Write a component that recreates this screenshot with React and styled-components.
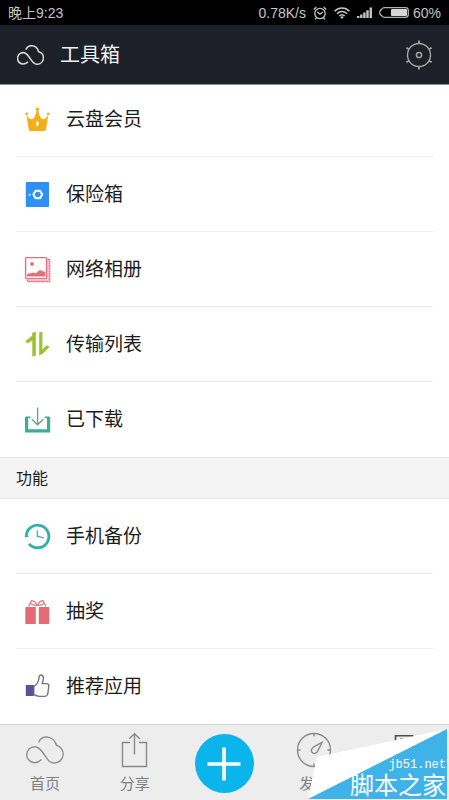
import React from 'react';
import styled, { createGlobalStyle } from 'styled-components';

const GlobalStyle = createGlobalStyle`
    *{
        box-sizing: border-box;
    }
    body{
        margin: 0;
        background-color: #fff;
        font-family: Roboto, "Noto Sans CJK SC", sans-serif;
    }
    ul{
        list-style: none;
        margin: 0;
        padding: 0;
    }
    svg{
        display: block;
        flex: none;
    }
`;

const CLOUD = 'M15.5 23.5C13.5 25.5 11 26.7 8.7 26.7A8 8 0 0 1 8.7 10.7C13 10.7 15 14 17.5 17.5C21 22.5 23 27 28 27A9 9 0 0 0 30.5 9.3C29 4.5 25 1 20.5 1C17 1 14 3 12.5 6.5';

const AlarmIcon = () => (
    <svg width="14" height="14" viewBox="0 0 14 14" fill="none" stroke="#c4c4c4" strokeWidth="1.3">
        <circle cx="7" cy="7.5" r="5.2" />
        <path d="M0.8 3.4L3.4 1M13.2 3.4L10.6 1M4.4 6L7 8.2L9.8 6M3.4 12L2.2 13.4M10.6 12l1.2 1.4" />
    </svg>
);

const WifiIcon = () => (
    <svg width="16" height="12" viewBox="0 0 16 12" fill="none" stroke="#c4c4c4" strokeWidth="1.6">
        <path d="M0.6 4.2C4.8 0 11.2 0 15.4 4.2M3 6.7C5.9 3.8 10.1 3.8 13 6.7M5.3 9C7 7.4 9 7.4 10.7 9" />
        <path d="M6.2 10L8 12L9.8 10C8.7 9 7.3 9 6.2 10Z" fill="#c4c4c4" stroke="none" />
    </svg>
);

const SignalIcon = () => (
    <svg width="15" height="11" viewBox="0 0 15 11" fill="#c4c4c4">
        <path d="M0 9h2.4v2H0zM3.1 7.6h2.4V11H3.1zM6.2 5.6h2.4V11H6.2zM9.3 3.2h2.4V11H9.3zM12.6 0.4H15V11h-2.4z" />
    </svg>
);

const BatteryIcon = () => (
    <svg width="30" height="11" viewBox="0 0 30 11">
        <path d="M5.5 0.7H26.5Q29.3 0.7 29.3 3.5V7.5Q29.3 10.3 26.5 10.3H5.5Q3.5 10.3 2.5 8.5Q0.7 8 0.7 5.5T2.5 2.5Q3.5 0.7 5.5 0.7Z" fill="none" stroke="#b0b0b0" strokeWidth="1.3" />
        <rect x="12" y="2" width="16" height="7" rx="1" fill="#d8d8d8" />
    </svg>
);

const BrandIcon = () => (
    <svg width="27" height="20" viewBox="0 0 38 28" fill="none" stroke="#d8d9db" strokeWidth="2.2">
        <path d={CLOUD} />
    </svg>
);

const GearIcon = () => (
    <svg width="30" height="30" viewBox="0 0 30 30" fill="none" stroke="#a3a5a9" strokeWidth="1.4">
        <circle cx="15" cy="15" r="11.5" />
        <circle cx="15" cy="15" r="2.6" strokeWidth="1.5" />
        <path d="M15 0.5v3M15 26.5v3M2.4 7.7L5 9.3M27.6 7.7L25 9.3M2.4 22.3L5 20.7M27.6 22.3L25 20.7" strokeWidth="1.8" />
    </svg>
);

const CrownIcon = () => (
    <svg width="27" height="27" viewBox="0 0 27 27" fill="#f3ae18">
        <circle cx="2.6" cy="7.8" r="1.4" />
        <circle cx="13.4" cy="3.2" r="1.7" />
        <circle cx="24.2" cy="7.8" r="1.4" />
        <path d="M2.4 8.5C4 11.5 5.8 13.2 7.6 13.2C10.2 13.2 11.8 9 12.5 4.5H14.3C15 9 16.6 13.2 19.2 13.2C21 13.2 22.8 11.5 24.4 8.5L22 23.6Q21.8 25 20.4 25H6.4Q5 25 4.8 23.6Z" />
        <path d="M13.4 13.6Q14 16.2 15.2 17.6Q14.6 19.8 13.4 20.6Q12.2 19.8 11.6 17.6Q12.8 16.2 13.4 13.6Z" fill="#fff6dc" />
    </svg>
);

const SafeIcon = () => (
    <svg width="27" height="27" viewBox="0 0 27 27">
        <path d="M2.8 1H24Q25 1 25 2V25Q25 26 24 26H2.8Q1.8 26 1.8 25V2Q1.8 1 2.8 1Z" fill="#2e90f3" />
        <path d="M11.6 9.8H16L18.2 13.5L16 17.2H11.6L9.4 13.5Z" fill="#2e90f3" stroke="#e8f7ff" strokeWidth="2.2" strokeLinejoin="round" />
        <circle cx="5.7" cy="13.7" r="1" fill="#e8f7ff" />
    </svg>
);

const AlbumIcon = () => (
    <svg width="27" height="27" viewBox="0 0 27 27" fill="none" stroke="#e0717b">
        <path d="M24.6 3.4V24.6H3.4" strokeWidth="2.4" opacity="0.45" />
        <path d="M23.6 3.4H25.8V25.6H3.4V23.6" strokeWidth="1.1" strokeDasharray="2 0.6" />
        <rect x="1.6" y="1.6" width="21" height="21" rx="1" fill="#fff" strokeWidth="1.4" />
        <circle cx="8" cy="8" r="1.9" fill="#e0717b" stroke="none" />
        <path d="M3 20.6V18.6Q4.6 16.6 6.6 17.4Q8.6 15.6 10.8 17Q12.6 17.6 13.8 15.6Q15.6 13.4 17.8 14.6Q18.8 16 21.2 15.6V20.6Z" fill="#e0717b" stroke="none" />
    </svg>
);

const TransferIcon = () => (
    <svg width="27" height="27" viewBox="0 0 27 27" fill="#98c52c">
        <path d="M8.2 1.8L11.8 0.8V24.8L8.3 25.6V9.4L3.6 12.6L1.4 10.2L8.2 4.6Z" />
        <path d="M15.2 1.6L18.4 0.8V18.6L22.8 14.2L25.6 15.8L18.6 22.8L15.2 24.8Z" />
    </svg>
);

const DownloadIcon = () => (
    <svg width="27" height="27" viewBox="0 0 27 27" fill="none" stroke="#3fae90">
        <path d="M6.6 11.3H2.6V25.2H24.6V11.3H20.6" strokeWidth="1.4" />
        <path d="M2.6 11V24.8H24.6V11" strokeWidth="3.2" />
        <path d="M13.6 1.4V18.6M8 13.2L13.6 18.8L19.2 13.2" strokeWidth="1.3" stroke="#5fa38f" />
    </svg>
);

const BackupIcon = () => (
    <svg width="27" height="27" viewBox="0 0 27 27" fill="none" stroke="#2fb0ac">
        <path d="M2.3 14A11.3 11.3 0 1 1 5 20.8" strokeWidth="2.8" />
        <path d="M0.8 13.4H4.4" strokeWidth="1.4" />
        <path d="M13.3 7.2V13.2L20 15" strokeWidth="1.2" />
    </svg>
);

const GiftIcon = () => (
    <svg width="27" height="27" viewBox="0 0 27 27" fill="#e26b75">
        <path d="M2.2 9H11.8V26H2.2Q1.3 26 1.3 25V10Q1.3 9 2.2 9Z" />
        <path d="M14.8 9H24.4Q25.3 9 25.3 10V25Q25.3 26 24.4 26H14.8Z" />
        <path d="M4.6 8.4L7.6 2.6Q12.2 3.2 13 8M22 8.4L19 2.6Q14.4 3.2 13.6 8M6.6 5.6Q9.4 7.8 12.6 7.4M20 5.6Q17.2 7.8 14 7.4" fill="none" stroke="#dd7d85" strokeWidth="1.3" />
    </svg>
);

const ThumbIcon = () => (
    <svg width="27" height="27" viewBox="0 0 27 27">
        <path d="M9.8 13.4Q13.6 11.4 14.6 6.8L15.2 3.4Q15.8 1.8 17.4 2Q19.6 2.6 19.4 5.4Q19.2 8 18.2 10.6H23Q25 11 24.8 13.2L23.8 20.8Q23.2 23.2 21 23.4H15.4Q12.4 23.2 9.8 21.4Z" fill="#fff" stroke="#77757f" strokeWidth="1.4" />
        <rect x="1.8" y="12" width="8" height="11" fill="#5c5197" />
    </svg>
);

const HomeIcon = () => (
    <svg width="38" height="36" viewBox="0 -4 38 36" fill="none" stroke="#8f8f8f" strokeWidth="1.4">
        <path d={CLOUD} />
    </svg>
);

const ShareIcon = () => (
    <svg width="38" height="36" viewBox="0 0 38 36" fill="none" stroke="#8a8a8a" strokeWidth="1.4">
        <path d="M14 10.5H6.5V34.5H30.5V10.5H23M18.5 2V22.5M13.2 6.8L18.5 1.8L23.8 6.8" />
    </svg>
);

const CompassIcon = () => (
    <svg width="38" height="36" viewBox="0 0 38 36" fill="none" stroke="#8a8a8a" strokeWidth="1.4">
        <circle cx="19" cy="18" r="16.5" />
        <path d="M19 1.5v3M19 31.5v3M2.5 18h3M32.5 18h3" />
        <path d="M27 10.5L22.6 19.4Q20.8 22.2 18 21.2Q15.4 19.4 17 16.6Q18 15.2 20 14.2Z" />
    </svg>
);

const MineIcon = () => (
    <svg width="38" height="36" viewBox="0 0 38 36" fill="none" stroke="#4c4c4c" strokeWidth="1.6">
        <path d="M10.5 34V3.8H27.5V34ZM15 7.4H27" />
    </svg>
);

const PlusIcon = () => (
    <svg width="34" height="34" viewBox="0 0 34 34" stroke="#fff" strokeWidth="3.6">
        <path d="M0.5 17H33.5M17 0.5V33.5" />
    </svg>
);

const tools = [
    { text: '云盘会员', Icon: CrownIcon },
    { text: '保险箱', Icon: SafeIcon },
    { text: '网络相册', Icon: AlbumIcon },
    { text: '传输列表', Icon: TransferIcon },
    { text: '已下载', Icon: DownloadIcon },
];

const functions = [
    { text: '手机备份', Icon: BackupIcon },
    { text: '抽奖', Icon: GiftIcon },
    { text: '推荐应用', Icon: ThumbIcon },
];

const RowList = ({ items }) => (
    <ul>
        {items.map(({ text, Icon }) => (
            <Row key={text}>
                <RowLink href="#">
                    <Icon />
                    <RowText>{text}</RowText>
                </RowLink>
            </Row>
        ))}
    </ul>
);

const Tab = ({ text, Icon }) => (
    <TabLink href="#">
        <Icon />
        {text && <span>{text}</span>}
    </TabLink>
);

// folded paper corner behind the site name
const StampShape = () => (
    <svg width="141" height="71" viewBox="0 0 141 71">
        <path d="M0 70L9 28L139 0Z" fill="#fff" />
        <path d="M0 70L139 0V70Z" fill="#3fb3e8" />
    </svg>
);

const App = () => {
    return (
        <Page>
            <GlobalStyle />
            <StatusBar>
                <span>晚上9:23</span>
                <StatusGroup>
                    <span>0.78K/s</span>
                    <AlarmIcon />
                    <WifiIcon />
                    <SignalIcon />
                    <Battery>
                        <BatteryIcon />
                        60%
                    </Battery>
                </StatusGroup>
            </StatusBar>
            <Header>
                <BrandIcon />
                <Title>工具箱</Title>
                <GearButton type="button">
                    <GearIcon />
                </GearButton>
            </Header>
            <Content>
                <Scrolled>
                    <RowList items={tools} />
                </Scrolled>
                <SectionTitle>功能</SectionTitle>
                <RowList items={functions} />
            </Content>
            <TabBar>
                <Tab text="首页" Icon={HomeIcon} />
                <Tab text="分享" Icon={ShareIcon} />
                <AddButton type="button">
                    <PlusIcon />
                </AddButton>
                <Tab text="发现" Icon={CompassIcon} />
                <Tab Icon={MineIcon} />
                <Stamp>
                    <StampShape />
                    <StampText>
                        <StampSite>jb51.net</StampSite>
                        <StampName>脚本之家</StampName>
                    </StampText>
                </Stamp>
            </TabBar>
        </Page>
    )
};

export default App;

const Page = styled.div`
    display: flex;
    flex-direction: column;
    min-height: 100vh;
    color: #1c1c1c;
`;

const StatusBar = styled.div`
    display: flex;
    align-items: center;
    justify-content: space-between;
    height: 25px;
    padding: 0 8px;
    background-color: #000;
    color: #c4c4c4;
    font-family: "Liberation Sans", "Noto Sans CJK SC", sans-serif;
    font-size: 14px;
    line-height: 24px;
`;

const StatusGroup = styled.div`
    display: flex;
    align-items: center;
    gap: 7px;
`;

const Battery = styled.span`
    display: flex;
    align-items: center;
    gap: 4px;
`;

const Header = styled.header`
    display: flex;
    align-items: center;
    gap: 16px;
    height: 60px;
    padding: 0 15px 0 17px;
    background-color: #1d2029;
    border-bottom: 1px solid #8e9094;
`;

const Title = styled.h1`
    flex: 1;
    margin: 0;
    color: #f0f0f0;
    font-size: 20px;
    font-weight: 400;
    line-height: 28px;
`;

const GearButton = styled.button`
    padding: 0;
    border: 0;
    background: none;
`;

const Content = styled.main`
    flex: 1;
`;

// the list sits a little under the header
const Scrolled = styled.div`
    overflow: hidden;
    ul{
        margin-top: -3px;
    }
`;

const Row = styled.li`
    padding: 0 16px;
    &:last-child > a{
        border-bottom-color: transparent;
    }
`;

const RowLink = styled.a`
    display: flex;
    align-items: center;
    gap: 15px;
    height: 75px;
    padding: 0 8px;
    border-bottom: 1px solid #ebebeb;
    color: inherit;
    text-decoration: none;
`;

const RowText = styled.span`
    padding-top: 2px;
    font-size: 19px;
    line-height: 28px;
`;

const SectionTitle = styled.h2`
    margin: 0;
    padding: 2px 16px 0;
    border: 1px solid #e6e6e6;
    border-width: 1px 0;
    background-color: #f4f4f4;
    font-size: 16px;
    font-weight: 400;
    line-height: 38px;
`;

const TabBar = styled.nav`
    position: relative;
    display: grid;
    grid-template-columns: repeat(5, 1fr);
    justify-items: center;
    height: 76px;
    padding-top: 7px;
    border-top: 1px solid #d6d6d6;
    background-color: #ededed;
`;

const TabLink = styled.a`
    display: flex;
    flex-direction: column;
    align-items: center;
    gap: 6px;
    color: #808080;
    font-size: 15px;
    line-height: 20px;
    text-decoration: none;
`;

const AddButton = styled.button`
    display: flex;
    align-items: center;
    justify-content: center;
    width: 59px;
    height: 59px;
    margin-top: 2px;
    padding: 0;
    border: 0;
    border-radius: 50%;
    background-color: #0cb4ec;
`;

const Stamp = styled.div`
    position: absolute;
    right: 0;
    bottom: 0;
    color: #fff;
`;

const StampText = styled.div`
    position: absolute;
    right: 3px;
    bottom: 1px;
    display: flex;
    flex-direction: column;
    align-items: flex-end;
`;

const StampSite = styled.span`
    font-family: "Liberation Mono", monospace;
    font-size: 12px;
    line-height: 14px;
`;

const StampName = styled.span`
    font-family: "Liberation Sans", "Noto Sans CJK SC", sans-serif;
    font-size: 24px;
    line-height: 27px;
    white-space: nowrap;
`;
